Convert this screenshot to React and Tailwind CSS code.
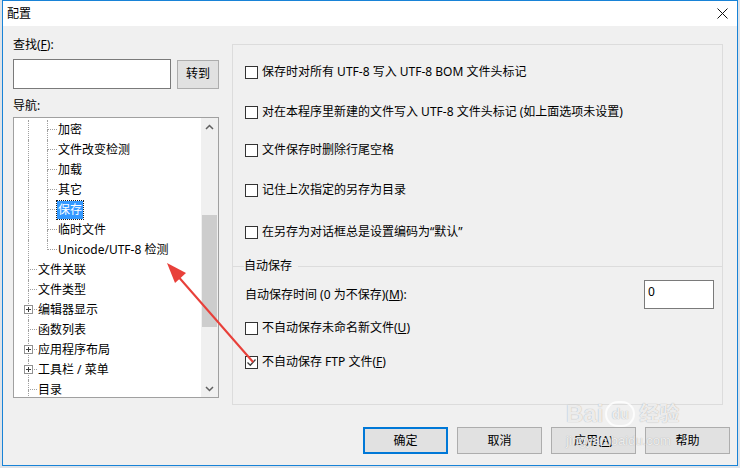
import React from 'react';

const font = "font-['Noto_Sans','Noto_Sans_CJK_SC',sans-serif]";

const nested = [
  { label: '加密' },
  { label: '文件改变检测' },
  { label: '加载' },
  { label: '其它' },
  { label: '保存', selected: true },
  { label: '临时文件' },
  { label: 'Unicode/UTF-8 检测', last: true },
];

const topLevel = [
  { label: '文件关联' },
  { label: '文件类型' },
  { label: '编辑器显示', plus: true },
  { label: '函数列表' },
  { label: '应用程序布局', plus: true },
  { label: '工具栏 / 菜单', plus: true },
  { label: '目录' },
];

const PlusBox = () => (
  <div className="absolute left-[-4px] top-[5px] w-[9px] h-[9px] border border-[#919191] bg-white flex items-center justify-center">
    <svg width="7" height="7" viewBox="0 0 7 7">
      <path d="M1 3.5h5M3.5 1v5" stroke="#3a3a3a" strokeWidth="1" />
    </svg>
  </div>
);

const NestedRow = ({ item }) => (
  <div className="flex h-[20px] items-stretch">
    <div className="w-[14px]" />
    <div className="w-[19px] border-l border-dotted border-[#a0a0a0]" />
    <div className="w-[10px] flex flex-col">
      <div className="h-[10px] border-l border-b border-dotted border-[#a0a0a0]" />
      <div className={item.last ? 'h-[10px]' : 'h-[10px] border-l border-dotted border-[#a0a0a0]'} />
    </div>
    <div className="flex items-center">
      <span
        className={
          item.selected
            ? 'h-[18px] leading-[18px] px-[1px] bg-[#3399ff] text-white outline outline-1 outline-dotted outline-[#1a1a1a]'
            : 'h-[18px] leading-[18px] px-[1px] text-black whitespace-nowrap'
        }
      >
        {item.label}
      </span>
    </div>
  </div>
);

const TopRow = ({ item }) => (
  <div className="flex h-[20px] items-stretch">
    <div className="w-[14px]" />
    <div className="w-[9px] flex flex-col relative">
      <div className="h-[10px] border-l border-b border-dotted border-[#a0a0a0]" />
      <div className="h-[10px] border-l border-dotted border-[#a0a0a0]" />
      {item.plus && <PlusBox />}
    </div>
    <div className="flex items-center">
      <span className="h-[18px] leading-[18px] px-[1px] text-black whitespace-nowrap">{item.label}</span>
    </div>
  </div>
);

const Check = ({ checked }) => (
  <div className="w-[13px] h-[13px] border border-[#333333] bg-white flex items-center justify-center shrink-0">
    {checked && (
      <svg width="11" height="11" viewBox="0 0 11 11">
        <path d="M1.5 5.5l2.8 2.8L9.5 2.5" fill="none" stroke="#3c3c3c" strokeWidth="1.3" />
      </svg>
    )}
  </div>
);

const CheckRow = ({ label, checked, className = '' }) => (
  <div className={'flex items-center h-[16px] pl-[12px] ' + className}>
    <Check checked={checked} />
    <span className="ml-[4px] text-[12px] leading-[16px] text-black whitespace-nowrap">{label}</span>
  </div>
);

const Btn = ({ children, primary }) => (
  <button
    className={
      primary
        ? 'w-[85px] h-[27px] bg-[#e1e1e1] border-2 border-[#0078d7] text-[12px] text-black'
        : 'w-[85px] h-[27px] bg-[#e1e1e1] border border-[#adadad] text-[12px] text-black'
    }
  >
    {children}
  </button>
);

export default function App() {
  return (
    <div className={'w-[740px] h-[468px] bg-[#dfe3e8] relative overflow-hidden ' + font}>
      <div className="ml-[2px] w-[736px] h-[466px] border border-[#1883d7] bg-[#f0f0f0] flex flex-col">
        {/* title bar */}
        <div className="h-[25px] bg-white flex items-center justify-between pl-[4px] pr-[9px] shrink-0">
          <span className="text-[12px] text-black">配置</span>
          <svg width="11" height="11" viewBox="0 0 11 11">
            <path d="M0.5 0.5l10 10M10.5 0.5l-10 10" stroke="#111" strokeWidth="1" />
          </svg>
        </div>

        {/* body */}
        <div className="flex flex-col pt-[11px] pl-[10px]">
          <div className="flex items-start">
            {/* left column */}
            <div className="w-[206px] flex flex-col text-[12px] text-black">
              <div className="h-[16px] leading-[16px]">
                查找(<span className="underline">F</span>):
              </div>
              <div className="mt-[6px] flex items-center">
                <div className="w-[158px] h-[30px] border border-[#7a7a7a] bg-white" />
                <button className="ml-[6px] w-[42px] h-[29px] bg-[#e1e1e1] border border-[#adadad] text-[12px]">
                  转到
                </button>
              </div>
              <div className="mt-[9px] h-[16px] leading-[16px]">导航:</div>
              <div className="mt-[3px] h-[281px] border border-[#a0a0a0] bg-white flex overflow-hidden">
                <div className="flex-1 pt-[2px] overflow-hidden">
                  {nested.map((n) => (
                    <NestedRow key={n.label} item={n} />
                  ))}
                  {topLevel.map((t) => (
                    <TopRow key={t.label} item={t} />
                  ))}
                </div>
                <div className="w-[17px] bg-[#f0f0f0] flex flex-col">
                  <div className="h-[17px] flex items-center justify-center">
                    <svg width="9" height="6" viewBox="0 0 9 6">
                      <path d="M1 5l3.5-3.5L8 5" fill="none" stroke="#606060" strokeWidth="1.5" />
                    </svg>
                  </div>
                  <div className="flex-1 flex flex-col items-center">
                    <div className="mt-[80px] w-[15px] h-[112px] bg-[#cdcdcd]" />
                  </div>
                  <div className="h-[17px] flex items-center justify-center">
                    <svg width="9" height="6" viewBox="0 0 9 6">
                      <path d="M1 1l3.5 3.5L8 1" fill="none" stroke="#606060" strokeWidth="1.5" />
                    </svg>
                  </div>
                </div>
              </div>
            </div>

            {/* right group */}
            <div className="ml-[13px] mt-[7px] w-[491px] h-[361px] border border-[#dcdcdc] flex flex-col pt-[19px]">
              <CheckRow label="保存时对所有 UTF-8 写入 UTF-8 BOM 文件头标记" />
              <CheckRow className="mt-[24px]" label="对在本程序里新建的文件写入 UTF-8 文件头标记 (如上面选项未设置)" />
              <CheckRow className="mt-[22px]" label="文件保存时删除行尾空格" />
              <CheckRow className="mt-[24px]" label="记住上次指定的另存为目录" />
              <CheckRow className="mt-[26px]" label="在另存为对话框总是设置编码为“默认”" />

              <div className="mt-[18px] h-[16px] flex items-center">
                <div className="w-[11px] border-t border-[#dcdcdc]" />
                <span className="text-[12px] leading-[16px] text-black">自动保存</span>
                <div className="ml-[6px] flex-1 border-t border-[#dcdcdc]" />
              </div>

              <div className="mt-[6px] flex items-center justify-between pl-[12px] pr-[8px]">
                <span className="text-[12px] leading-[16px] text-black">
                  自动保存时间 (0 为不保存)(<span className="underline">M</span>):
                </span>
                <div className="w-[70px] h-[29px] border border-[#7a7a7a] bg-white pl-[3px] pt-[3px] text-[12px] leading-[16px] text-black">
                  0
                </div>
              </div>

              <CheckRow
                className="mt-[11px]"
                label={
                  <>
                    不自动保存未命名新文件(<span className="underline">U</span>)
                  </>
                }
              />
              <CheckRow
                className="mt-[18px]"
                checked
                label={
                  <>
                    不自动保存 FTP 文件(<span className="underline">F</span>)
                  </>
                }
              />
            </div>
          </div>

          {/* buttons */}
          <div className="mt-[22px] flex justify-end gap-[9px] pr-[7px]">
            <Btn primary>确定</Btn>
            <Btn>取消</Btn>
            <Btn>
              应用(<span className="underline">A</span>)
            </Btn>
            <Btn>帮助</Btn>
          </div>
        </div>
      </div>

      {/* red annotation arrow */}
      <svg className="absolute left-0 top-0 pointer-events-none" width="740" height="468">
        <line x1="253" y1="362" x2="176" y2="274" stroke="#e8403a" strokeWidth="2" />
        <polygon points="167,263 186,273 175,283" fill="#e8403a" />
      </svg>

      {/* watermark */}
      <div className="absolute left-[566px] top-[400px] pointer-events-none flex items-center text-white/80 [text-shadow:0_0_1px_#9a9a9a]">
        <span className="text-[24px] font-bold leading-[28px] font-['Liberation_Sans',sans-serif]">Bai</span>
        <span className="ml-[2px] w-[30px] h-[26px] rounded-full border-2 border-white/80 text-[14px] font-bold leading-[22px] text-center font-['Liberation_Sans',sans-serif]">du</span>
        <span className="ml-[4px] text-[20px] font-bold leading-[28px]">经验</span>
      </div>
      <div className="absolute left-[566px] top-[433px] pointer-events-none text-[13px] leading-[16px] text-white/80 [text-shadow:0_0_1px_#9a9a9a] font-['Liberation_Sans',sans-serif]">
        jingyan.baidu.com
      </div>
    </div>
  );
}
